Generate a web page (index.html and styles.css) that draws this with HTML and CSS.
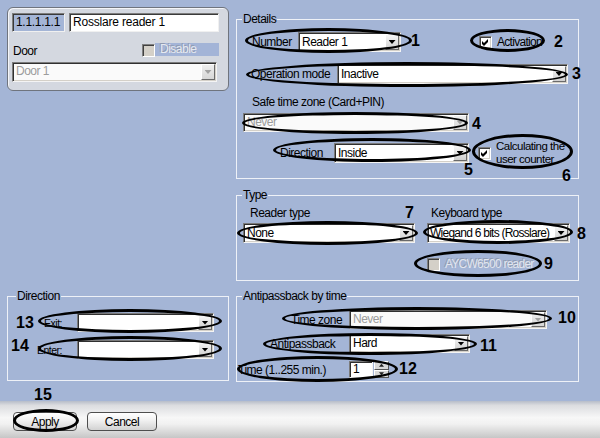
FILE: index.html
```html
<!DOCTYPE html>
<html>
<head>
<meta charset="utf-8">
<link rel="stylesheet" href="styles.css">
</head>
<body>
<div class="screen">
  <div class="content">
    <div class="col-left">
      <div class="panel">
        <div class="p-row1">
          <div class="idbox">1.1.1.1.1</div>
          <div class="textbox">Rosslare reader 1</div>
        </div>
        <div class="p-row2">
          <span class="door-lbl">Door</span>
          <span class="chk chk-dis p-chk"></span>
          <span class="dis-bar">Disable</span>
        </div>
        <div class="sel dis sel-door"><span class="val">Door 1</span><span class="dd"><i class="arr"></i></span></div>
      </div>
    </div>

    <div class="col-right">
      <fieldset class="grp details">
        <legend>Details</legend>
        <div class="d-row1">
          <span class="lbl lbl-number">Number</span>
          <div class="sel sel-number"><span class="val">Reader 1</span><span class="dd"><i class="arr"></i></span></div>
          <span class="chk chk-act"><svg width="7" height="7" viewBox="0 0 7 7"><path d="M0 2L2 4L6 0L6 3L2 7L0 5Z"/></svg></span>
          <span class="chk-text">Activation</span>
        </div>
        <div class="d-row2">
          <span class="lbl lbl-opmode">Operation mode</span>
          <div class="sel sel-opmode"><span class="val">Inactive</span><span class="dd"><i class="arr"></i></span></div>
        </div>
        <div class="d-row3">Safe time zone (Card+PIN)</div>
        <div class="d-row4">
          <div class="sel dis sel-never"><span class="val">Never</span><span class="dd"><i class="arr"></i></span></div>
        </div>
        <div class="d-row5">
          <span class="lbl lbl-dir">Direction</span>
          <div class="sel sel-dir"><span class="val">Inside</span><span class="dd"><i class="arr"></i></span></div>
          <span class="chk chk-calc"><svg width="7" height="7" viewBox="0 0 7 7"><path d="M0 2L2 4L6 0L6 3L2 7L0 5Z"/></svg></span>
          <span class="calc-text">Calculating the<br>user counter</span>
        </div>
      </fieldset>

      <fieldset class="grp type">
        <legend>Type</legend>
        <div class="t-labels">
          <span class="t-lbl1">Reader type</span>
          <span class="t-lbl2">Keyboard type</span>
        </div>
        <div class="t-sels">
          <div class="sel sel-none"><span class="val">None</span><span class="dd"><i class="arr"></i></span></div>
          <div class="sel sel-wiegand"><span class="val">Wiegand 6 bits (Rosslare)</span><span class="dd"><i class="arr"></i></span></div>
        </div>
        <div class="t-chk">
          <span class="chk chk-dis"></span>
          <span class="dis-text">AYCW6500 reader</span>
        </div>
      </fieldset>
    </div>

    <fieldset class="grp direction">
      <legend>Direction</legend>
      <div class="dir-row dir-exit">
        <span class="dir-lbl">Exit:</span>
        <div class="sel sel-small sel-dirsel"><span class="val"></span><span class="dd"><i class="arr"></i></span></div>
      </div>
      <div class="dir-row dir-enter">
        <span class="dir-lbl">Enter:</span>
        <div class="sel sel-small sel-dirsel"><span class="val"></span><span class="dd"><i class="arr"></i></span></div>
      </div>
    </fieldset>

    <fieldset class="grp apb">
      <legend>Antipassback by time</legend>
      <div class="apb-row apb-tz">
        <span class="apb-lbl lbl-tz">Time zone</span>
        <div class="sel sel-small dis sel-tz"><span class="val">Never</span><span class="dd"><i class="arr"></i></span></div>
      </div>
      <div class="apb-row apb-ap">
        <span class="apb-lbl lbl-ap">Antipassback</span>
        <div class="sel sel-small sel-hard"><span class="val">Hard</span><span class="dd"><i class="arr"></i></span></div>
      </div>
      <div class="apb-row apb-time">
        <span class="apb-lbl lbl-time">Time (1..255 min.)</span>
        <div class="num-input">1</div>
        <div class="spin"><span><i class="sarr up"></i></span><span><i class="sarr"></i></span></div>
      </div>
    </fieldset>
  </div>

  <div class="footer">
    <button class="btn btn-apply">Apply</button>
    <button class="btn btn-cancel">Cancel</button>
  </div>

  <div class="notes">
    <span class="ell e1"></span><span class="num n1">1</span>
    <span class="ell e2"></span><span class="num n2">2</span>
    <span class="ell e3"></span><span class="num n3">3</span>
    <span class="ell e4"></span><span class="num n4">4</span>
    <span class="ell e5"></span><span class="num n5">5</span>
    <span class="ell e6"></span><span class="num n6">6</span>
    <span class="ell e7"></span><span class="num n7">7</span>
    <span class="ell e8"></span><span class="num n8">8</span>
    <span class="ell e9"></span><span class="num n9">9</span>
    <span class="ell e10"></span><span class="num n10">10</span>
    <span class="ell e11"></span><span class="num n11">11</span>
    <span class="ell e12"></span><span class="num n12">12</span>
    <span class="ell e13"></span><span class="num n13">13</span>
    <span class="ell e14"></span><span class="num n14">14</span>
    <span class="ell e15"></span><span class="num n15">15</span>
  </div>
</div>
</body>
</html>
```
FILE: styles.css
```css
* { box-sizing: border-box; }
html, body { margin: 0; padding: 0; }
body {
  width: 600px; height: 438px; overflow: hidden;
  background: #a4b5d6;
  font-family: "Liberation Sans", Arial, sans-serif;
  font-size: 12px; line-height: 14px; letter-spacing: -0.5px; color: #000;
}
.screen { position: relative; width: 600px; height: 438px; display: flex; flex-direction: column; }
.content {
  display: grid;
  grid-template-columns: 222px 343px;
  grid-template-rows: 283px 92px;
  column-gap: 7px;
  padding: 7px 0 0 7px;
}

/* top-left panel */
.panel {
  height: 84px; background: #d4d8e0;
  border: 1px solid #6f747e; border-radius: 6px;
  box-shadow: inset 1px 1px 0 #f4f5f8;
  padding: 5px 9px 0 4px;
}
.p-row1 { display: flex; gap: 4px; height: 19px; }
.idbox {
  width: 53px; background: #a4b5d6;
  border: 1px solid; border-color: #7d7d7d #f0f0f0 #f0f0f0 #7d7d7d;
  box-shadow: inset 1px 1px 0 #3a3a3a;
  padding-left: 3px; line-height: 16px; letter-spacing: -0.3px;
}
.textbox {
  flex: 1; background: #fff;
  border: 1px solid; border-color: #7d7d7d #f0f0f0 #f0f0f0 #7d7d7d;
  box-shadow: inset 1px 1px 0 #3a3a3a;
  padding-left: 3px; line-height: 16px; letter-spacing: -0.2px;
}
.p-row2 { display: flex; align-items: flex-start; height: 13px; margin-top: 11px; }
.door-lbl { margin-top: 1px; margin-left: 1px; }
.p-chk { margin-left: auto; margin-top: 1px; width: 12px; height: 12px; }
.dis-bar {
  width: 64px; height: 13px; background: #a3b4d7; padding-left: 5px;
  line-height: 13px; color: #e6e9f0; text-shadow: -1px -1px 0 #8f9ab0;
}
.sel-door { margin-top: 6px; width: 205px; height: 19px; }

/* generic controls */
.sel {
  display: flex; height: 20px; background: #fff; padding: 1px;
  border: 1px solid; border-color: #7b7b7b #f4f4f4 #f4f4f4 #7b7b7b;
  box-shadow: inset 1px 1px 0 #303030, inset -1px -1px 0 #d4d0c8;
}
.sel .val { flex: 1; padding-left: 2px; line-height: 16px; white-space: nowrap; overflow: hidden; }
.sel-small { height: 19px; }
.sel-small .val, .sel-door .val { line-height: 15px; }
.sel .dd {
  width: 14px; flex: none; display: flex; align-items: center; justify-content: center;
  background: linear-gradient(#f6f6f6, #d0d0d0);
  border: 1px solid; border-color: #ffffff #6a6a6a #6a6a6a #ffffff;
}
.arr { display: block; width: 7px; height: 4px; background: #000; clip-path: polygon(0 0, 100% 0, 50% 100%); }
.sel.dis { background: #fafafa; }
.sel.dis .val { color: #9c9c9c; }
.sel.dis .dd { background: linear-gradient(#eeeeee, #d6d6d6); }
.sel.dis .arr { background: #a2a2a2; }

.chk {
  width: 13px; height: 13px; flex: none; background: #fff;
  border: 1px solid; border-color: #808080 #ffffff #ffffff #808080;
  box-shadow: inset 1px 1px 0 #404040, inset -1px -1px 0 #d4d0c8;
  display: flex; align-items: center; justify-content: center;
}
.chk svg { display: block; }
.chk-dis { background: #d4d0c8; }
.dis-text { color: #e2e6ee; text-shadow: -1px -1px 0 #8f9ab0; margin-left: 5px; letter-spacing: -0.75px; }

/* fieldsets */
.grp { margin: 0; padding: 0; border: 1px solid #eef1f7; min-width: 0; }
.grp > legend { margin-left: 5px; padding: 0 1px; line-height: 12px; }
.col-right { padding-top: 6px; display: flex; flex-direction: column; gap: 10px; }
.details { height: 166px; }
.type { height: 92px; }
.direction { height: 91px; }
.apb { height: 92px; }
.direction > legend { margin-left: 8px; }

/* details rows */
.lbl { flex: none; }
.d-row1 { display: flex; align-items: center; height: 20px; margin-top: 7px; }
.lbl-number { width: 61px; padding-left: 15px; }
.sel-number { width: 103px; }
.chk-act { margin-left: 78px; }
.chk-text { margin-left: 5px; letter-spacing: -0.7px; }
.d-row2 { display: flex; align-items: center; height: 20px; margin-top: 12px; }
.lbl-opmode { width: 100px; padding-left: 14px; }
.sel-opmode { width: 231px; }
.d-row3 { margin-top: 11px; padding-left: 15px; }
.d-row4 { margin-top: 4px; padding-left: 6px; }
.sel-never { width: 226px; height: 19px; }
.sel-never .val { line-height: 15px; }
.d-row5 { display: flex; align-items: center; height: 20px; margin-top: 11px; }
.lbl-dir { width: 97px; padding-left: 43px; }
.sel-dir { width: 135px; }
.chk-calc { margin-left: 9px; }
.calc-text { margin-left: 5px; font-size: 11.5px; line-height: 13px; }

/* type rows */
.t-labels { display: flex; margin-top: 5px; }
.t-lbl1 { width: 187px; padding-left: 13px; }
.t-lbl2 { padding-left: 7px; }
.t-sels { display: flex; margin-top: 3px; padding-left: 6px; }
.sel-none { width: 172px; }
.sel-wiegand { width: 143px; margin-left: 12px; }
.sel-wiegand .val { padding-left: 1px; letter-spacing: -0.75px; }
.t-chk { display: flex; align-items: center; margin-top: 14px; padding-left: 190px; }

/* direction rows */
.dir-row { display: flex; align-items: center; height: 19px; }
.dir-exit { margin-top: 11px; }
.dir-enter { margin-top: 8px; }
.dir-lbl { width: 69px; text-align: right; padding-right: 15px; font-size: 10.5px; }
.sel-dirsel { width: 137px; }

/* antipassback rows */
.apb-row { display: flex; align-items: center; }
.apb-lbl { width: 112px; flex: none; }
.apb-tz { margin-top: 8px; height: 19px; }
.lbl-tz { padding-left: 54px; }
.sel-tz { width: 198px; }
.apb-ap { margin-top: 5px; height: 19px; }
.lbl-ap { padding-left: 33px; }
.sel-hard { width: 121px; }
.apb-time { margin-top: 8px; height: 17px; }
.lbl-time { padding-left: 1px; }
.num-input {
  width: 24px; height: 17px; background: #fff; padding-left: 3px; line-height: 14px;
  border: 1px solid; border-color: #7b7b7b #f4f4f4 #f4f4f4 #7b7b7b;
  box-shadow: inset 1px 1px 0 #303030;
}
.spin { width: 15px; height: 17px; margin-left: 1px; display: flex; flex-direction: column; }
.spin span {
  flex: 1; display: flex; align-items: center; justify-content: center;
  background: #d8d8d8; border: 1px solid; border-color: #ffffff #555 #555 #ffffff;
}
.sarr { display: block; width: 5px; height: 3px; background: #222; clip-path: polygon(0 0, 100% 0, 50% 100%); }
.sarr.up { clip-path: polygon(50% 0, 100% 100%, 0 100%); }

/* footer */
.footer {
  margin-top: auto; height: 37px;
  background: linear-gradient(#b7bdc9 0, #dcdde0 12%, #f7f7f7 45%, #f1f1f1 62%, #c6c6c6 100%);
  display: flex; align-items: flex-start; gap: 10px; padding: 11px 0 0 13px;
}
.btn {
  height: 19px; padding: 0; font: inherit; line-height: 16px; letter-spacing: -0.5px; color: #000;
  border: 1px solid #4e4e4e; border-radius: 4px;
  background: linear-gradient(#ffffff, #f0f0f0 45%, #d2d2d2);
}
.btn-apply { width: 64px; }
.btn-cancel { width: 70px; }

/* annotations */
.notes { position: absolute; left: 0; top: 0; width: 600px; height: 438px; pointer-events: none; }
.ell { position: absolute; border: 3px solid #000; border-radius: 50%; }
.num { position: absolute; font-family: "Liberation Sans", Arial, sans-serif; font-weight: bold; font-size: 16px; line-height: 16px; letter-spacing: 0; }
.e1 { left: 245px; top: 28px; width: 167px; height: 25px; }
.e2 { left: 470px; top: 29px; width: 75px; height: 23px; }
.e3 { left: 246px; top: 62px; width: 322px; height: 25px; }
.e4 { left: 242px; top: 112px; width: 226px; height: 22px; }
.e5 { left: 273px; top: 138px; width: 198px; height: 24px; }
.e6 { left: 472px; top: 134px; width: 101px; height: 35px; }
.e7 { left: 237px; top: 221px; width: 181px; height: 24px; }
.e8 { left: 423px; top: 220px; width: 150px; height: 24px; }
.e9 { left: 414px; top: 250px; width: 128px; height: 27px; }
.e10 { left: 282px; top: 307px; width: 270px; height: 23px; }
.e11 { left: 263px; top: 333px; width: 214px; height: 22px; }
.e12 { left: 237px; top: 356px; width: 161px; height: 26px; }
.e13 { left: 38px; top: 309px; width: 184px; height: 24px; }
.e14 { left: 38px; top: 336px; width: 184px; height: 25px; }
.e15 { left: 13px; top: 409px; width: 66px; height: 23px; }
.n1 { left: 411px; top: 33px; }
.n2 { left: 554px; top: 34px; }
.n3 { left: 572px; top: 66px; }
.n4 { left: 472px; top: 116px; }
.n5 { left: 464px; top: 162px; }
.n6 { left: 562px; top: 168px; }
.n7 { left: 405px; top: 205px; }
.n8 { left: 577px; top: 226px; }
.n9 { left: 544px; top: 256px; }
.n10 { left: 558px; top: 310px; }
.n11 { left: 480px; top: 338px; }
.n12 { left: 399px; top: 361px; }
.n13 { left: 16px; top: 315px; }
.n14 { left: 11px; top: 338px; }
.n15 { left: 34px; top: 387px; }
```
